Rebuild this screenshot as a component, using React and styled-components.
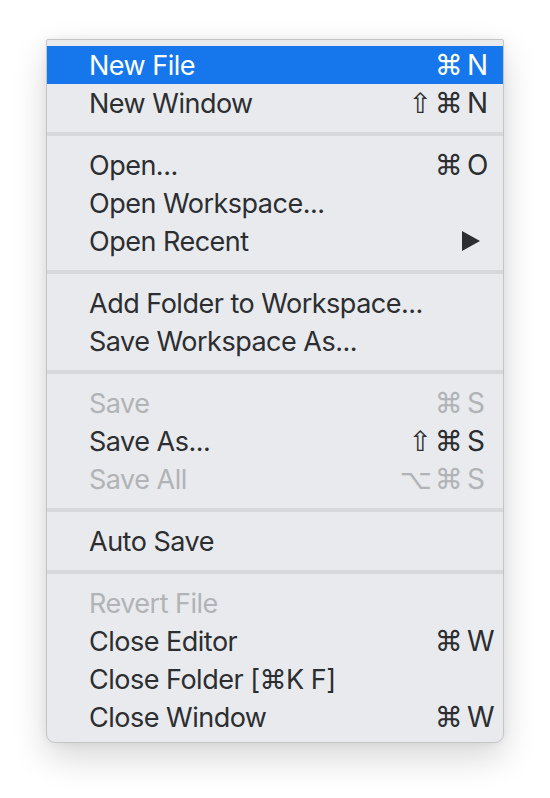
import React from "react";
import styled, { createGlobalStyle } from "styled-components";

const GlobalStyle = createGlobalStyle`
  html, body {
    margin: 0;
    padding: 0;
    background: #ffffff;
  }
  body {
    font-family: Inter, "Noto Sans", "DejaVu Sans", sans-serif;
  }
`;

const Page = styled.div`
  display: flex;
  justify-content: center;
  padding-top: 39px;
  height: 798px;
  box-sizing: border-box;
`;

const Menu = styled.div`
  width: 458px;
  box-sizing: border-box;
  background: #e8eaed;
  border: 1px solid #c4c5c7;
  border-radius: 2px 2px 9px 9px;
  padding: 6px 0 6px;
  align-self: flex-start;
  box-shadow: 0 14px 34px rgba(0, 0, 0, 0.16), 0 0 10px rgba(0, 0, 0, 0.06);
`;

const Row = styled.div`
  display: grid;
  grid-template-columns: ${(p) => (p.$submenu ? "1fr auto" : "1fr auto 30px")};
  align-items: center;
  height: 38px;
  padding: 0 6px 0 42px;
  font-size: 27px;
  letter-spacing: -0.5px;
  color: ${(p) => (p.$active ? "#ffffff" : p.$disabled ? "#b1b3b6" : "#2c2e31")};
  background: ${(p) => (p.$active ? "#1677ec" : "transparent")};
`;

const Label = styled.span`
  white-space: nowrap;
`;

const Mods = styled.span`
  text-align: right;
  padding-right: 1px;
  font-family: "DejaVu Sans", sans-serif;
  font-size: 28px;
  letter-spacing: 3px;
`;

const Key = styled.span`
  text-align: left;
  font-size: 28px;
  letter-spacing: 0;
`;

const Separator = styled.div`
  height: 4px;
  margin: 10px 0 10px;
  background: #d7d8dc;
`;

const Arrow = styled.svg`
  width: 18px;
  height: 20px;
  justify-self: end;
  margin-right: 17px;
  fill: currentColor;
`;

const groups = [
  [
    { label: "New File", mods: "⌘", key: "N", active: true },
    { label: "New Window", mods: "⇧⌘", key: "N" },
  ],
  [
    { label: "Open...", mods: "⌘", key: "O" },
    { label: "Open Workspace..." },
    { label: "Open Recent", submenu: true },
  ],
  [
    { label: "Add Folder to Workspace..." },
    { label: "Save Workspace As..." },
  ],
  [
    { label: "Save", mods: "⌘", key: "S", disabled: true },
    { label: "Save As...", mods: "⇧⌘", key: "S" },
    { label: "Save All", mods: "⌥⌘", key: "S", disabled: true },
  ],
  [{ label: "Auto Save" }],
  [
    { label: "Revert File", disabled: true },
    { label: "Close Editor", mods: "⌘", key: "W" },
    { label: "Close Folder [⌘K F]" },
    { label: "Close Window", mods: "⌘", key: "W" },
  ],
];

function MenuRow({ item }) {
  if (item.submenu) {
    return (
      <Row $submenu>
        <Label>{item.label}</Label>
        <Arrow viewBox="0 0 18 20">
          <path d="M0 0 L18 10 L0 20 Z" />
        </Arrow>
      </Row>
    );
  }
  return (
    <Row $active={item.active} $disabled={item.disabled}>
      <Label>{item.label}</Label>
      <Mods>{item.mods}</Mods>
      <Key>{item.key}</Key>
    </Row>
  );
}

export default function App() {
  return (
    <>
      <GlobalStyle />
      <Page>
        <Menu>
          {groups.map((group, gi) => (
            <React.Fragment key={gi}>
              {gi > 0 && <Separator />}
              {group.map((item) => (
                <MenuRow key={item.label} item={item} />
              ))}
            </React.Fragment>
          ))}
        </Menu>
      </Page>
    </>
  );
}
